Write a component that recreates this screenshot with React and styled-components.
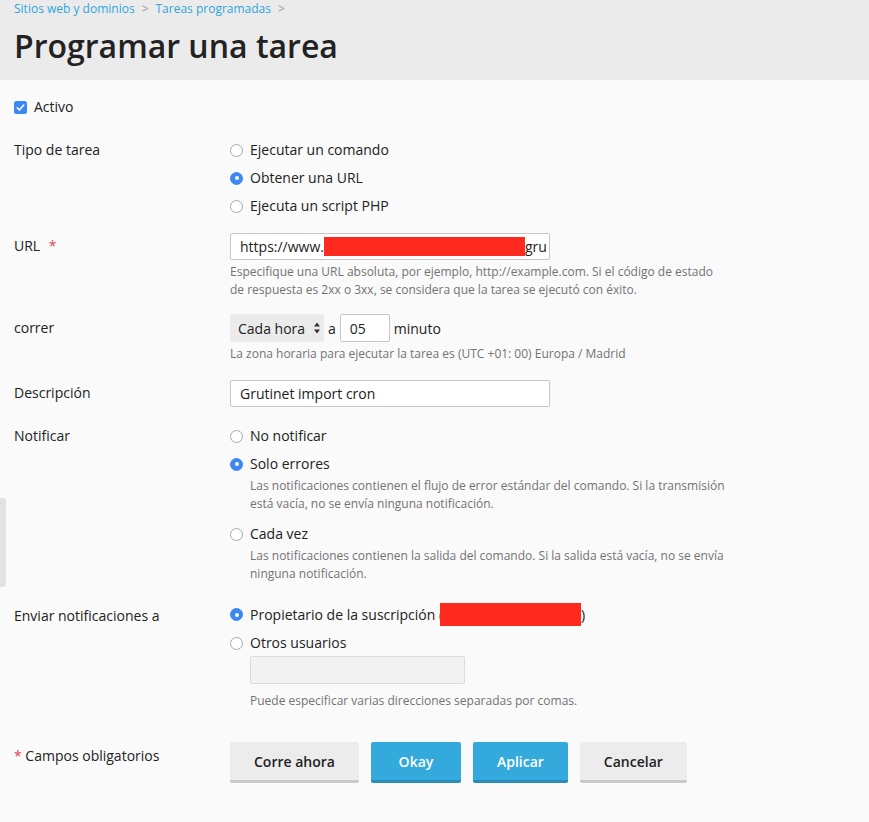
import React from "react";
import styled, { createGlobalStyle } from "styled-components";

const GlobalStyle = createGlobalStyle`
  html, body {
    margin: 0;
    padding: 0;
    background: #fafafa;
    font-family: "Open Sans", "Liberation Sans", sans-serif;
    color: #222;
  }
`;

const Page = styled.div`
  position: relative;
  width: 869px;
  min-height: 822px;
  background: #fafafa;
`;

const Header = styled.div`
  background: #ebebeb;
  height: 80px;
  padding: 0 14px;
  box-sizing: border-box;
`;

const Breadcrumbs = styled.div`
  display: flex;
  align-items: center;
  font-size: 12px;
  line-height: 18px;
  color: #2ea7dc;
`;

const Crumb = styled.a`
  color: #2ea7dc;
  text-decoration: none;
`;

const Sep = styled.span`
  color: #999;
  margin: 0 7px;
  font-size: 12px;
`;

const Title = styled.h1`
  margin: 8px 0 0;
  font-size: 32px;
  line-height: 40px;
  font-weight: 600;
  color: #222;
`;

const Form = styled.div`
  padding: 17px 14px 0;
`;

const Row = styled.div`
  display: grid;
  grid-template-columns: 216px 1fr;
  margin-top: ${(p) => p.$mt || 0}px;
`;

const Label = styled.div`
  font-size: 14px;
  line-height: 20px;
  padding-top: ${(p) => p.$pt || 0}px;
  color: #222;
`;

const Star = styled.span`
  color: #e3425a;
  margin-left: ${(p) => p.$ml || 0}px;
`;

const Check = styled.label`
  display: flex;
  align-items: center;
  gap: 7px;
  font-size: 14px;
  line-height: 20px;
`;

const Option = styled.div`
  display: flex;
  align-items: center;
  gap: 7px;
  font-size: 14px;
  line-height: 20px;
  margin-top: ${(p) => p.$mt || 0}px;
`;

const RadioDot = styled.span`
  width: 13px;
  height: 13px;
  border-radius: 50%;
  box-sizing: border-box;
  flex: none;
  position: relative;
  background: ${(p) => (p.$on ? "#3d87f5" : "#fff")};
  border: 1px solid ${(p) => (p.$on ? "#3d87f5" : "#a8a8a8")};
  &::after {
    content: "";
    display: ${(p) => (p.$on ? "block" : "none")};
    position: absolute;
    left: 3.5px;
    top: 3.5px;
    width: 4px;
    height: 4px;
    border-radius: 50%;
    background: #fff;
  }
`;

const Hint = styled.div`
  font-size: 12px;
  line-height: 18px;
  color: #737373;
  margin-top: ${(p) => p.$mt || 0}px;
  padding-left: ${(p) => p.$indent || 0}px;
  max-width: ${(p) => p.$max || 520}px;
`;

const TextBox = styled.div`
  width: ${(p) => p.$w || 320}px;
  height: ${(p) => p.$h || 27}px;
  box-sizing: border-box;
  border: 1px solid ${(p) => (p.$disabled ? "#dcdcdc" : "#c8c8c8")};
  background: ${(p) => (p.$disabled ? "#f2f2f2" : "#fff")};
  border-radius: 2px;
  padding: 0 9px;
  font-size: 14px;
  display: flex;
  align-items: center;
  white-space: nowrap;
  overflow: hidden;
  margin-left: ${(p) => p.$ml || 0}px;
  margin-top: ${(p) => p.$mt || 0}px;
`;

const Redacted = styled.span`
  display: inline-block;
  flex: none;
  width: ${(p) => p.$w}px;
  height: ${(p) => p.$h}px;
  background: #ff2a1f;
  margin-left: ${(p) => p.$ml || 0}px;
`;

const Paren = styled.span`
  margin-left: -7px;
`;

const Inline = styled.div`
  display: flex;
  align-items: center;
  gap: 4px;
  font-size: 14px;
`;

const Select = styled.div`
  width: 94px;
  height: 28px;
  box-sizing: border-box;
  background: #ebebeb;
  border-radius: 3px;
  padding: 0 3px 0 8px;
  display: flex;
  align-items: center;
  justify-content: space-between;
  font-size: 14px;
`;

const Buttons = styled.div`
  display: flex;
  gap: 12px;
`;

const Button = styled.button`
  height: 41px;
  min-width: 90px;
  padding: 0 24px;
  border: none;
  border-radius: 2px;
  box-sizing: border-box;
  font-family: inherit;
  font-size: 14px;
  font-weight: 600;
  cursor: pointer;
  background: ${(p) => (p.$primary ? "#33a9dc" : "#ececec")};
  color: ${(p) => (p.$primary ? "#fff" : "#222")};
  border-bottom: 3px solid ${(p) => (p.$primary ? "#2b8cb8" : "#c9c9c9")};
`;

const SideTab = styled.div`
  position: absolute;
  left: 0;
  top: 498px;
  width: 6px;
  height: 89px;
  background: #e2e2e2;
  border-radius: 0 3px 3px 0;
`;

const CheckBox = () => (
  <svg width="13" height="13" viewBox="0 0 13 13">
    <rect width="13" height="13" rx="2.5" fill="#3d87f5" />
    <path d="M3.2 6.8l2.2 2.3 4.4-5" stroke="#fff" strokeWidth="1.5" fill="none" strokeLinecap="round" strokeLinejoin="round" />
  </svg>
);

const Arrows = () => (
  <svg width="8" height="14" viewBox="0 0 8 14">
    <path d="M4 1.5l3 4H1z" fill="#333" />
    <path d="M4 12.5l3-4H1z" fill="#333" />
  </svg>
);

const Radio = ({ on, children, mt }) => (
  <Option $mt={mt}>
    <RadioDot $on={on} />
    <span>{children}</span>
  </Option>
);

export default function App() {
  return (
    <Page>
      <GlobalStyle />
      <Header>
        <Breadcrumbs>
          <Crumb>Sitios web y dominios</Crumb>
          <Sep>&gt;</Sep>
          <Crumb>Tareas programadas</Crumb>
          <Sep>&gt;</Sep>
        </Breadcrumbs>
        <Title>Programar una tarea</Title>
      </Header>

      <Form>
        <Check>
          <CheckBox />
          Activo
        </Check>

        <Row $mt={23}>
          <Label>Tipo de tarea</Label>
          <div>
            <Radio>Ejecutar un comando</Radio>
            <Radio on mt={8}>Obtener una URL</Radio>
            <Radio mt={8}>Ejecuta un script PHP</Radio>
          </div>
        </Row>

        <Row $mt={17}>
          <Label $pt={3}>
            URL <Star $ml={5}>*</Star>
          </Label>
          <div>
            <TextBox>
              https://www.
              <Redacted $w={201} $h={19} />
              gru
            </TextBox>
            <Hint $mt={3} $max={500}>
              Especifique una URL absoluta, por ejemplo, http://example.com. Si el código de estado de respuesta es 2xx o 3xx, se considera que la tarea se ejecutó con éxito.
            </Hint>
          </div>
        </Row>

        <Row $mt={15}>
          <Label $pt={4}>correr</Label>
          <div>
            <Inline>
              <Select>
                Cada hora
                <Arrows />
              </Select>
              <span>a</span>
              <TextBox $w={50} $h={28}>05</TextBox>
              <span>minuto</span>
            </Inline>
            <Hint $mt={3}>La zona horaria para ejecutar la tarea es (UTC +01: 00) Europa / Madrid</Hint>
          </div>
        </Row>

        <Row $mt={17}>
          <Label $pt={3}>Descripción</Label>
          <TextBox>Grutinet import cron</TextBox>
        </Row>

        <Row $mt={19}>
          <Label>Notificar</Label>
          <div>
            <Radio>No notificar</Radio>
            <Radio on mt={8}>Solo errores</Radio>
            <Hint $indent={20} $max={500} $mt={3}>
              Las notificaciones contienen el flujo de error estándar del comando. Si la transmisión está vacía, no se envía ninguna notificación.
            </Hint>
            <Radio mt={11}>Cada vez</Radio>
            <Hint $indent={20} $max={500} $mt={3}>
              Las notificaciones contienen la salida del comando. Si la salida está vacía, no se envía ninguna notificación.
            </Hint>
          </div>
        </Row>

        <Row $mt={20}>
          <Label $pt={3}>Enviar notificaciones a</Label>
          <div>
            <Option>
              <RadioDot $on />
              <span>Propietario de la suscripción (</span>
              <Redacted $w={141} $h={23} $ml={-10} />
              <Paren>)</Paren>
            </Option>
            <Radio mt={7}>Otros usuarios</Radio>
            <TextBox $disabled $w={215} $h={28} $ml={20} $mt={3} />
            <Hint $indent={20} $mt={8}>Puede especificar varias direcciones separadas por comas.</Hint>
          </div>
        </Row>

        <Row $mt={32}>
          <Label $pt={4}>
            <Star>*</Star> Campos obligatorios
          </Label>
          <Buttons>
            <Button>Corre ahora</Button>
            <Button $primary>Okay</Button>
            <Button $primary>Aplicar</Button>
            <Button>Cancelar</Button>
          </Buttons>
        </Row>
      </Form>
      <SideTab />
    </Page>
  );
}
